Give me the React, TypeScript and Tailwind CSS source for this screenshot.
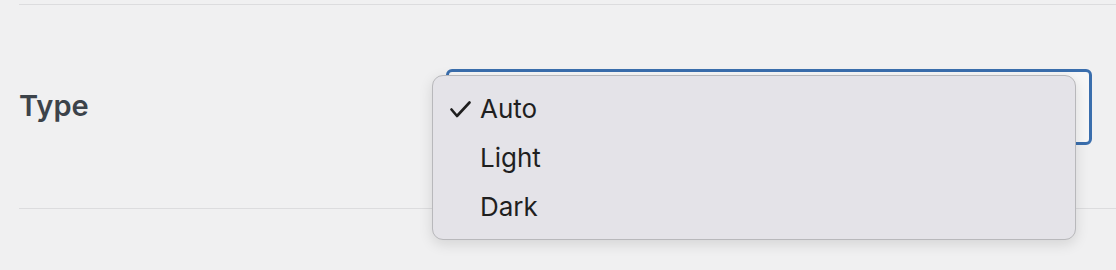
import { useState } from "react";

const options = ["Auto", "Light", "Dark"];

export default function App() {
  const [selected] = useState("Auto");

  return (
    <div
      className="h-[270px] w-full overflow-hidden bg-[#f0f0f1] pl-[19px]"
      style={{ fontFamily: "Inter, 'Liberation Sans', sans-serif" }}
    >
      <div className="mt-[4px] border-t border-[#dcdcde]" />

      {/* Settings row */}
      <div className="flex h-[204px] items-center border-b border-[#dcdcde]">
        <div className="w-[427px] shrink-0 pb-[2px] text-[29px] font-semibold leading-none text-[#3c434a]">
          Type
        </div>

        <div className="relative">
          <div className="h-[76px] w-[646px] rounded-[6px] border-[3px] border-[#3a6ead] bg-[#f7f7f7]" />

          {/* Open dropdown menu */}
          <div className="absolute left-[-14px] top-[6px] h-[165px] w-[644px] rounded-[11px] border border-[#b8b8bb] bg-[#e4e3e8] pt-[8px] shadow-[0_4px_14px_rgba(0,0,0,0.12)]">
            {options.map((opt) => (
              <div
                key={opt}
                className="flex h-[49px] items-center text-[26px] text-[#1f1f1f]"
              >
                <div className="flex w-[47px] justify-end pr-[9px]">
                  {selected === opt && (
                    <svg width="21" height="17" viewBox="0 0 21 17" className="mt-[2px]">
                      <path
                        d="M1.5 8.5 L7 15 L19.5 1.5"
                        fill="none"
                        stroke="#1f1f1f"
                        strokeWidth="2.6"
                        strokeLinecap="round"
                        strokeLinejoin="round"
                      />
                    </svg>
                  )}
                </div>
                <span>{opt}</span>
              </div>
            ))}
          </div>
        </div>
      </div>
    </div>
  );
}
